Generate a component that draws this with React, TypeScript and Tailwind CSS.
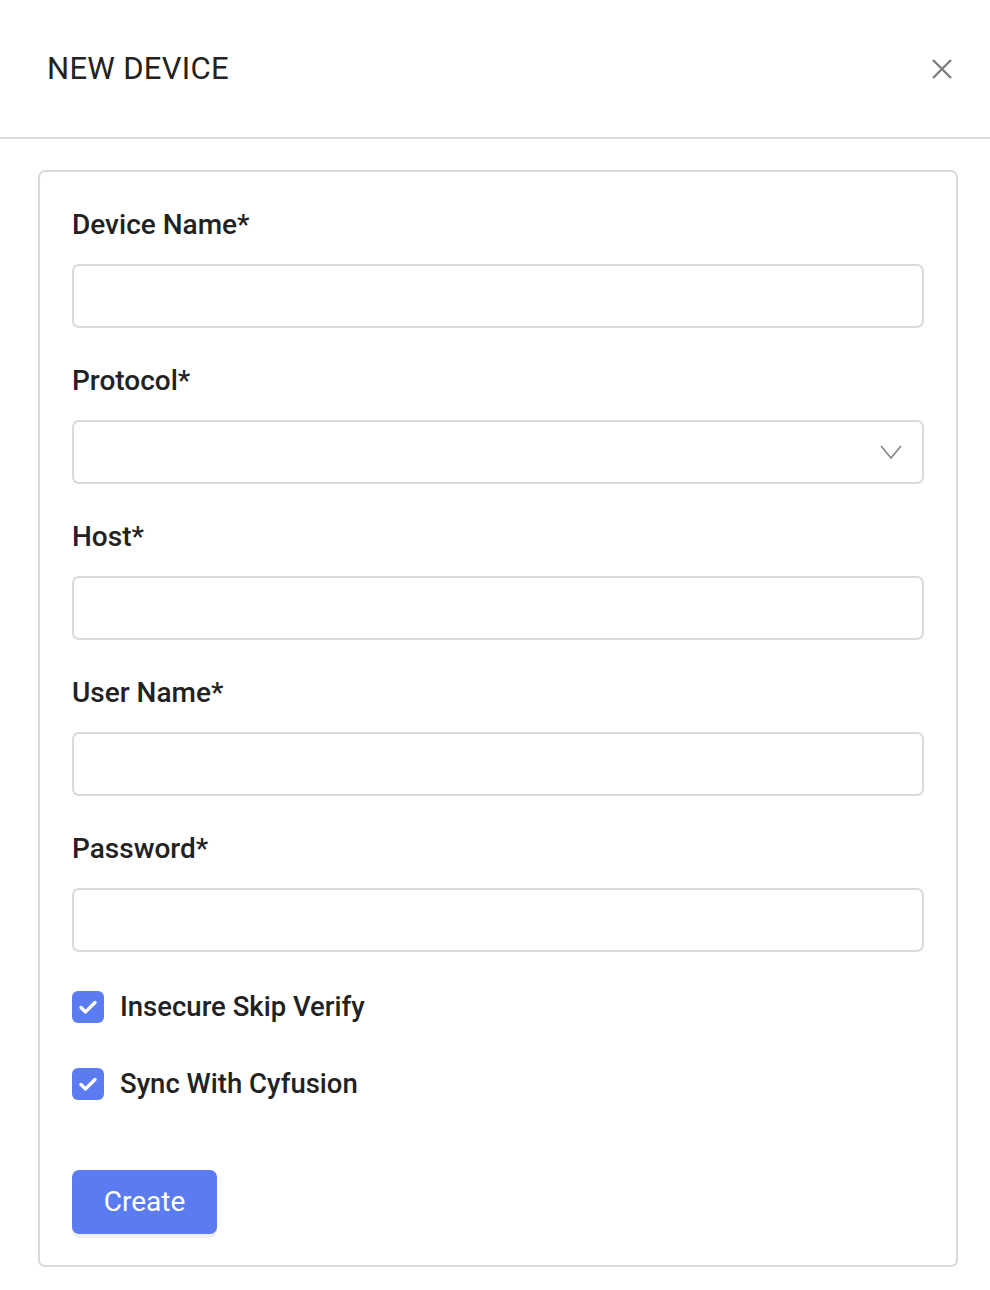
import React, { useState } from "react";

const FieldLabel: React.FC<{ children: React.ReactNode }> = ({ children }) => (
  <label className="block text-[28px] font-medium leading-[32px] text-[#222222] mb-[23px]">
    {children}
  </label>
);

const TextField: React.FC<{ label: string; type?: string }> = ({ label, type = "text" }) => (
  <div className="mb-[37px]">
    <FieldLabel>{label}*</FieldLabel>
    <input
      type={type}
      className="block w-full h-[64px] rounded-[7px] border-2 border-[#dadada] bg-white px-4 text-[24px] outline-none"
    />
  </div>
);

const CheckRow: React.FC<{ label: string; checked: boolean; onToggle: () => void }> = ({
  label,
  checked,
  onToggle,
}) => (
  <button type="button" onClick={onToggle} className="flex items-center gap-4 text-left">
    <span
      className={`flex h-[32px] w-[32px] items-center justify-center rounded-[6px] ${
        checked ? "bg-[#5b7cf0]" : "border-2 border-[#dadada] bg-white"
      }`}
    >
      {checked && (
        <svg width="22" height="22" viewBox="0 0 22 22" fill="none">
          <path
            d="M4 11.5l4.6 4.4L18 6.5"
            stroke="white"
            strokeWidth="3.4"
            strokeLinecap="round"
            strokeLinejoin="round"
          />
        </svg>
      )}
    </span>
    <span className="text-[27.5px] font-medium leading-[32px] text-[#222222]">{label}</span>
  </button>
);

export default function App() {
  const [skipVerify, setSkipVerify] = useState(true);
  const [sync, setSync] = useState(true);

  return (
    <div className="min-h-[1290px] bg-white font-['Roboto',sans-serif]">
      {/* header */}
      <div className="flex h-[139px] items-center justify-between border-b-2 border-[#dcdcdc] pl-[47px] pr-[38px]">
        <h1 className="text-[31px] font-normal leading-none tracking-[0.3px] text-[#222222]">NEW DEVICE</h1>
        <button type="button" className="text-[#7f7f7f]">
          <svg width="20" height="20" viewBox="0 0 20 20" fill="none">
            <path d="M1 1l18 18M19 1L1 19" stroke="currentColor" strokeWidth="2.4" />
          </svg>
        </button>
      </div>

      <div className="pl-[38px] pr-[32px] pt-[31px]">
        <div className="rounded-[7px] border-2 border-[#dadada] px-[32px] pt-[37px] pb-[31px]">
          <TextField label="Device Name" />

          <div className="mb-[37px]">
            <FieldLabel>Protocol*</FieldLabel>
            <div className="relative">
              <select className="block w-full h-[64px] appearance-none rounded-[7px] border-2 border-[#dadada] bg-white px-4 text-[24px] outline-none">
                <option value=""></option>
              </select>
              <svg
                className="pointer-events-none absolute right-[22px] top-1/2 -translate-y-1/2"
                width="22"
                height="15"
                viewBox="0 0 22 15"
                fill="none"
              >
                <path d="M1 1.5l10 12 10-12" stroke="#858585" strokeWidth="1.6" />
              </svg>
            </div>
          </div>

          <TextField label="Host" />
          <TextField label="User Name" />
          <TextField label="Password" type="password" />

          <div className="-mt-[35px] flex flex-col items-start gap-[45px] pt-[37px]">
            <CheckRow label="Insecure Skip Verify" checked={skipVerify} onToggle={() => setSkipVerify(!skipVerify)} />
            <CheckRow label="Sync With Cyfusion" checked={sync} onToggle={() => setSync(!sync)} />
          </div>

          <button
            type="button"
            className="mt-[70px] h-[64px] w-[145px] rounded-[7px] bg-[#5b7cf0] text-[28px] text-white shadow-[0_4px_0_#efefef]"
          >
            Create
          </button>
        </div>
      </div>
    </div>
  );
}
